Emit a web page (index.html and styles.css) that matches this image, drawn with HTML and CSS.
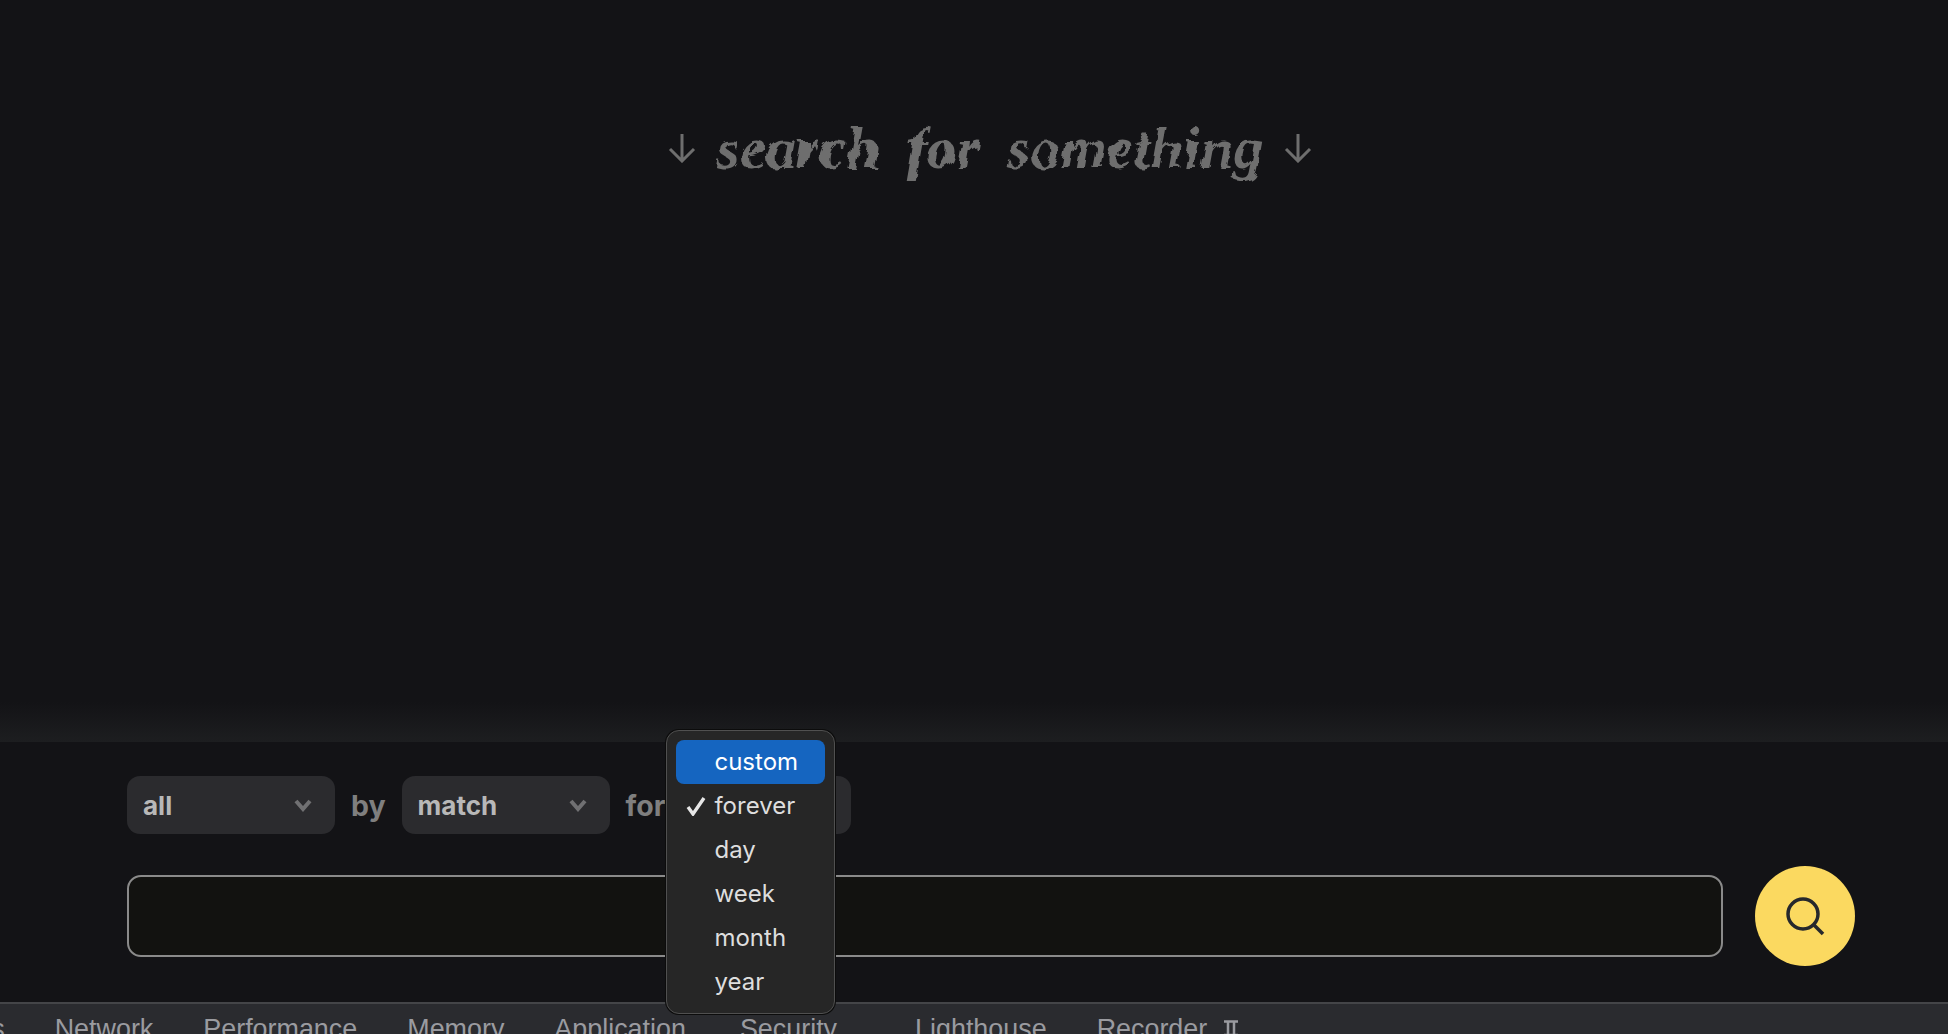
FILE: index.html
```html
<!DOCTYPE html>
<html lang="en">
<head>
    <meta charset="UTF-8">
    <title>search</title>
    <link rel="stylesheet" href="styles.css">
</head>
<body>
    <svg class="defs" width="0" height="0">
        <filter id="jagged" x="-5%" y="-20%" width="110%" height="140%">
            <feTurbulence type="fractalNoise" baseFrequency="0.09" numOctaves="1" seed="4"/>
            <feDisplacementMap in="SourceGraphic" scale="9"/>
        </filter>
    </svg>

    <main class="results">
        <div class="banner">
            <svg class="arrow" viewBox="0 0 28 30"><path d="M14 1v27M2 16l12 12 12-12"/></svg>
            <span class="banner-text">search for something</span>
            <svg class="arrow" viewBox="0 0 28 30"><path d="M14 1v27M2 16l12 12 12-12"/></svg>
        </div>
    </main>

    <section class="search-panel">
        <div class="filters">
            <div class="select">all<svg class="chevron" viewBox="0 0 18 13"><path d="M2 2l7 8 7-8"/></svg></div>
            <span class="filter-label">by</span>
            <div class="select">match<svg class="chevron" viewBox="0 0 18 13"><path d="M2 2l7 8 7-8"/></svg></div>
            <span class="filter-label">for</span>
            <div class="select select-open">
                <ul class="menu">
                    <li class="menu-item active">custom</li>
                    <li class="menu-item"><svg class="check" viewBox="0 0 20 20"><path d="M2 11l5 7L18 2"/></svg>forever</li>
                    <li class="menu-item">day</li>
                    <li class="menu-item">week</li>
                    <li class="menu-item">month</li>
                    <li class="menu-item">year</li>
                </ul>
            </div>
        </div>
        <div class="query-row">
            <input class="query" type="text">
            <button class="search-btn">
                <svg viewBox="0 0 40 40"><circle cx="18" cy="18" r="15"/><path d="M29 29l9 9"/></svg>
            </button>
        </div>
    </section>

    <nav class="devtools">
        <span class="tab">Sources</span>
        <span class="tab">Network</span>
        <span class="tab">Performance</span>
        <span class="tab">Memory</span>
        <span class="tab tab-app">Application</span>
        <span class="tab tab-wide">Security</span>
        <span class="tab">Lighthouse</span>
        <span class="tab tab-pinned">Recorder<svg class="pin" viewBox="0 0 14 20"><path d="M0 1.5h14M4 1.5v14M10 1.5v14M0 15h14M7 15v5"/></svg></span>
    </nav>
</body>
</html>
```

FILE: styles.css
```css
* {
    box-sizing: border-box;
}
html, body {
    height: 100%;
}
body {
    margin: 0;
    display: flex;
    flex-direction: column;
    overflow: hidden;
    background-color: #131316;
    font-family: Inter, "Liberation Sans", sans-serif;
}
.defs {
    position: absolute;
}
.results {
    flex: 1;
    padding: 116px 0 0 32px;
    background: linear-gradient(to bottom, transparent calc(100% - 40px), #1d1e20);
}
.banner {
    display: flex;
    justify-content: center;
    align-items: center;
    gap: 20px;
    color: #6e6e6e;
}
.banner-text {
    font-family: "Liberation Serif", serif;
    font-style: italic;
    font-weight: bold;
    font-size: 60px;
    line-height: 64px;
    word-spacing: 12px;
    filter: url(#jagged);
}
.arrow {
    width: 28px;
    height: 30px;
    fill: none;
    stroke: #6e6e6e;
    stroke-width: 3;
}
.search-panel {
    padding: 34px 93px 36px 127px;
}
.filters {
    display: flex;
    align-items: center;
    gap: 16px;
    height: 58px;
}
.select {
    position: relative;
    display: flex;
    align-items: center;
    justify-content: space-between;
    width: 208px;
    height: 58px;
    padding: 0 23px 0 16px;
    border-radius: 13px;
    background-color: #2b2b2e;
    color: #b8b8b8;
    font-size: 26px;
    font-weight: 700;
}
.select-open {
    width: 170px;
}
.chevron {
    width: 18px;
    height: 13px;
    fill: none;
    stroke: #707072;
    stroke-width: 4;
}
.filter-label {
    color: #7f7f7f;
    font-size: 28.5px;
    font-weight: 700;
}
.menu {
    position: absolute;
    top: -46px;
    left: -15px;
    width: 169px;
    margin: 0;
    padding: 9px;
    list-style: none;
    background-color: #262626;
    border: 1px solid #505050;
    border-radius: 13px;
    box-shadow: 0 0 0 1px #0c0c0c;
    font-size: 24px;
    font-weight: 400;
    color: #dedede;
}
.menu-item {
    position: relative;
    height: 44px;
    line-height: 44px;
    padding-left: 38px;
    border-radius: 8px;
}
.menu-item.active {
    background-color: #1565c0;
    color: #fff;
}
.check {
    position: absolute;
    left: 10px;
    top: 12px;
    width: 20px;
    height: 20px;
    fill: none;
    stroke: #e6e6e6;
    stroke-width: 3.4;
}
.query-row {
    display: flex;
    align-items: center;
    gap: 32px;
    margin-top: 32px;
}
.query {
    flex: 1;
    height: 82px;
    background-color: #121210;
    border: 2px solid #8a8a8a;
    border-radius: 14px;
}
.search-btn {
    display: flex;
    align-items: center;
    justify-content: center;
    width: 100px;
    height: 100px;
    padding: 0;
    border: none;
    border-radius: 50%;
    background-color: #fbd960;
}
.search-btn svg {
    width: 40px;
    height: 40px;
    fill: none;
    stroke: #26282c;
    stroke-width: 3.5;
}
.devtools {
    display: flex;
    gap: 50px;
    height: 32px;
    flex-shrink: 0;
    padding-top: 10px;
    padding-left: 58px;
    overflow: hidden;
    border-top: 2px solid #444548;
    background-color: #2a2b2f;
    color: #9a9ba0;
    font-family: "Liberation Sans", sans-serif;
    font-size: 26.9px;
    line-height: 30px;
    white-space: nowrap;
}
.tab:first-child {
    margin-left: -152px;
}
.tab-app {
    margin-right: 4px;
}
.tab-wide {
    margin-right: 28px;
}
.tab-pinned {
    display: flex;
    align-items: flex-start;
}
.pin {
    flex-shrink: 0;
    width: 14px;
    height: 20px;
    margin: 6px 0 0 17px;
    fill: none;
    stroke: #9a9ba0;
    stroke-width: 2.5;
}
```
